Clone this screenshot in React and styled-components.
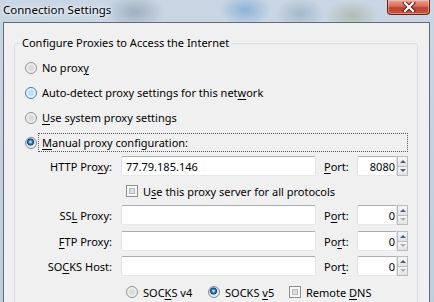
import React from "react";
import styled, { createGlobalStyle, css } from "styled-components";

const GlobalStyle = createGlobalStyle`
  html, body {
    margin: 0;
    padding: 0;
    background: #f0f0f0;
  }
  body {
    font-family: "Noto Sans", "Open Sans", sans-serif;
    font-size: 11px;
    color: #000;
  }
`;

// Aero glass frame, blurred desktop behind it
const Window = styled.div`
  width: 434px;
  height: 302px;
  overflow: hidden;
  display: flex;
  flex-direction: column;
  background:
    radial-gradient(ellipse 30px 18px at 135px 12px, rgba(110, 130, 150, 0.45), transparent),
    radial-gradient(ellipse 26px 16px at 245px 10px, rgba(90, 150, 205, 0.55), transparent),
    radial-gradient(ellipse 24px 16px at 300px 14px, rgba(120, 150, 175, 0.45), transparent),
    radial-gradient(ellipse 26px 16px at 352px 16px, rgba(150, 155, 120, 0.45), transparent),
    linear-gradient(180deg, #c9d6e3 0%, #bfcedd 100%);
`;

const TitleBar = styled.div`
  height: 22px;
  flex: none;
  display: flex;
  align-items: flex-start;
  justify-content: space-between;
  padding-left: 3px;
`;

const Title = styled.div`
  font-size: 11.5px;
  line-height: 19px;
  text-shadow: 0 0 6px #fff, 0 0 3px #fff;
`;

const CloseButton = styled.div`
  width: 43px;
  height: 15px;
  box-sizing: border-box;
  margin-right: 4px;
  border: 1px solid #6a2416;
  border-top: none;
  border-radius: 0 0 4px 4px;
  background: linear-gradient(180deg, #e7a897 0%, #d46b55 45%, #c0432c 55%, #c9553c 100%);
  box-shadow: inset 0 0 0 1px rgba(255, 210, 200, 0.45);
  display: flex;
  align-items: center;
  justify-content: center;
`;

const Client = styled.div`
  flex: 1;
  margin: 0 4px 0 3px;
  border: 1px solid #5f6b77;
  border-bottom: none;
  background: #f0f0f0;
  padding: 12px 11px 0 10px;
`;

const GroupBox = styled.fieldset`
  margin: 0;
  padding: 0 0 20px;
  min-width: 0;
  border: 1px solid #d5dfe5;
  border-radius: 3px;
  font: inherit;
`;

const Legend = styled.legend`
  margin-left: 5px;
  padding: 0 2px;
  font: inherit;
  line-height: 16px;
`;

const Body = styled.div`
  padding-top: 4px;
  display: flex;
  flex-direction: column;
`;

const RadioRow = styled.div`
  height: 25px;
  display: flex;
  align-items: center;
  padding-left: 10px;
`;

const radioFace = {
  normal: css`
    border-color: #8d8f91;
    background:
      radial-gradient(circle at 50% 50%, #dcdcdc 0 2.5px, #e9e9e9 3.5px, #f7f7f7 5px);
  `,
  hot: css`
    border-color: #3c7fb1;
    background:
      radial-gradient(circle at 50% 50%, #b7e2f9 0 2.5px, #d4eefc 3.5px, #eef8fe 5px);
  `,
  checked: css`
    border-color: #7b8a99;
    background:
      radial-gradient(circle at 45% 40%, #9fd8ff 0 0.8px, #2f86cc 1.8px, #11406f 3.2px, #d0d4d8 3.8px, #eeeeee 5px);
  `,
};

const Radio = styled.span`
  width: 12px;
  height: 12px;
  box-sizing: border-box;
  border-radius: 50%;
  border: 1px solid;
  flex: none;
  ${(p) => radioFace[p.$state || "normal"]}
`;

const Check = styled.span`
  width: 12px;
  height: 12px;
  box-sizing: border-box;
  flex: none;
  border: 1px solid #8e8f8f;
  background: linear-gradient(135deg, #c4c6c8, #f2f2f2);
  box-shadow: inset 0 0 0 2px #f6f6f6, inset 0 0 0 3px #b9bcbf;
`;

const OptionText = styled.span`
  margin-left: 1px;
  padding: 0 3px;
  height: 17px;
  display: flex;
  align-items: center;
  border: 1px dotted ${(p) => (p.$focus ? "#5a5a5a" : "transparent")};
  ${(p) =>
    p.$focus &&
    css`
      flex: 1;
      margin-right: 9px;
    `}
`;

const Key = styled.u`
  text-underline-offset: 2px;
`;

const FormRow = styled.div`
  height: 20px;
  margin-top: ${(p) => p.$gap ?? 5}px;
  display: flex;
  align-items: center;
`;

const Label = styled.span`
  width: 97px;
  text-align: right;
  margin-right: 9px;
  flex: none;
`;

const TextBox = styled.div`
  width: 195px;
  height: 20px;
  box-sizing: border-box;
  border: 1px solid #e2e3ea;
  border-top-color: #abadb3;
  border-bottom-color: #e3e9ef;
  border-radius: 2px;
  background: #fff;
  padding: 0 4px;
  display: flex;
  align-items: center;
`;

const PortLabel = styled.span`
  width: 33px;
  margin-left: 8px;
  flex: none;
`;

const Spinner = styled.div`
  display: flex;
  height: 20px;
`;

const NumberBox = styled(TextBox)`
  width: 40px;
  justify-content: flex-end;
  padding: 0 1px 0 0;
  border-radius: 2px 0 0 2px;
`;

const SpinButtons = styled.div`
  width: 11px;
  display: flex;
  flex-direction: column;
`;

const SpinButton = styled.div`
  flex: 1;
  box-sizing: border-box;
  border: 1px solid #b8bcc2;
  background: linear-gradient(180deg, #f7f7f7, #e3e3e3);
  display: flex;
  align-items: center;
  justify-content: center;
  & + & {
    border-top: none;
  }
`;

const Arrow = styled.span`
  width: 0;
  height: 0;
  border-left: 3px solid transparent;
  border-right: 3px solid transparent;
  ${(p) =>
    p.$down
      ? css`
          border-top: 3px solid ${p.$off ? "#a8adb3" : "#4c607e"};
        `
      : css`
          border-bottom: 3px solid ${p.$off ? "#a8adb3" : "#4c607e"};
        `}
`;

const InlineRow = styled.div`
  height: 20px;
  margin-top: ${(p) => p.$gap ?? 5}px;
  padding-left: 111px;
  display: flex;
  align-items: center;
`;

const Option = styled.span`
  display: flex;
  align-items: center;
  gap: 5px;
  width: ${(p) => (p.$w ? `${p.$w}px` : "auto")};
`;

const CloseGlyph = () => (
  <svg width="14" height="10" viewBox="0 0 14 10">
    <path d="M3 1 L11 9 M11 1 L3 9" stroke="#4a1a12" strokeWidth="4" strokeLinecap="square" />
    <path d="M3 1 L11 9 M11 1 L3 9" stroke="#fff" strokeWidth="2.2" strokeLinecap="square" />
  </svg>
);

const Port = ({ value, off, children }) => (
  <>
    <PortLabel>{children}</PortLabel>
    <Spinner>
      <NumberBox>{value}</NumberBox>
      <SpinButtons>
        <SpinButton>
          <Arrow />
        </SpinButton>
        <SpinButton>
          <Arrow $down $off={off} />
        </SpinButton>
      </SpinButtons>
    </Spinner>
  </>
);

const App = () => (
  <>
    <GlobalStyle />
    <Window>
      <TitleBar>
        <Title>Connection Settings</Title>
        <CloseButton>
          <CloseGlyph />
        </CloseButton>
      </TitleBar>
      <Client>
        <GroupBox>
          <Legend>Configure Proxies to Access the Internet</Legend>
          <Body>
            <RadioRow>
              <Radio />
              <OptionText>
                No prox<Key>y</Key>
              </OptionText>
            </RadioRow>
            <RadioRow>
              <Radio $state="hot" />
              <OptionText>
                Auto-detect proxy settings for this net<Key>w</Key>ork
              </OptionText>
            </RadioRow>
            <RadioRow>
              <Radio />
              <OptionText>
                <Key>U</Key>se system proxy settings
              </OptionText>
            </RadioRow>
            <RadioRow>
              <Radio $state="checked" />
              <OptionText $focus>
                <Key>M</Key>anual proxy configuration:
              </OptionText>
            </RadioRow>

            <FormRow $gap={1}>
              <Label>
                HTTP Pro<Key>x</Key>y:
              </Label>
              <TextBox>77.79.185.146</TextBox>
              <Port value="8080">
                <Key>P</Key>ort:
              </Port>
            </FormRow>
            <InlineRow>
              <Option>
                <Check />
                <span>
                  U<Key>s</Key>e this proxy server for all protocols
                </span>
              </Option>
            </InlineRow>
            <FormRow $gap={4}>
              <Label>
                SS<Key>L</Key> Proxy:
              </Label>
              <TextBox />
              <Port value="0" off>
                P<Key>o</Key>rt:
              </Port>
            </FormRow>
            <FormRow $gap={6}>
              <Label>
                <Key>F</Key>TP Proxy:
              </Label>
              <TextBox />
              <Port value="0" off>
                Po<Key>r</Key>t:
              </Port>
            </FormRow>
            <FormRow>
              <Label>
                SO<Key>C</Key>KS Host:
              </Label>
              <TextBox />
              <Port value="0" off>
                Por<Key>t</Key>:
              </Port>
            </FormRow>
            <InlineRow $gap={6}>
              <Option $w={82}>
                <Radio />
                <span>
                  SOC<Key>K</Key>S v4
                </span>
              </Option>
              <Option $w={81}>
                <Radio $state="checked" />
                <span>
                  SOCKS <Key>v</Key>5
                </span>
              </Option>
              <Option>
                <Check />
                <span>
                  Remote <Key>D</Key>NS
                </span>
              </Option>
            </InlineRow>
          </Body>
        </GroupBox>
      </Client>
    </Window>
  </>
);

export default App;
